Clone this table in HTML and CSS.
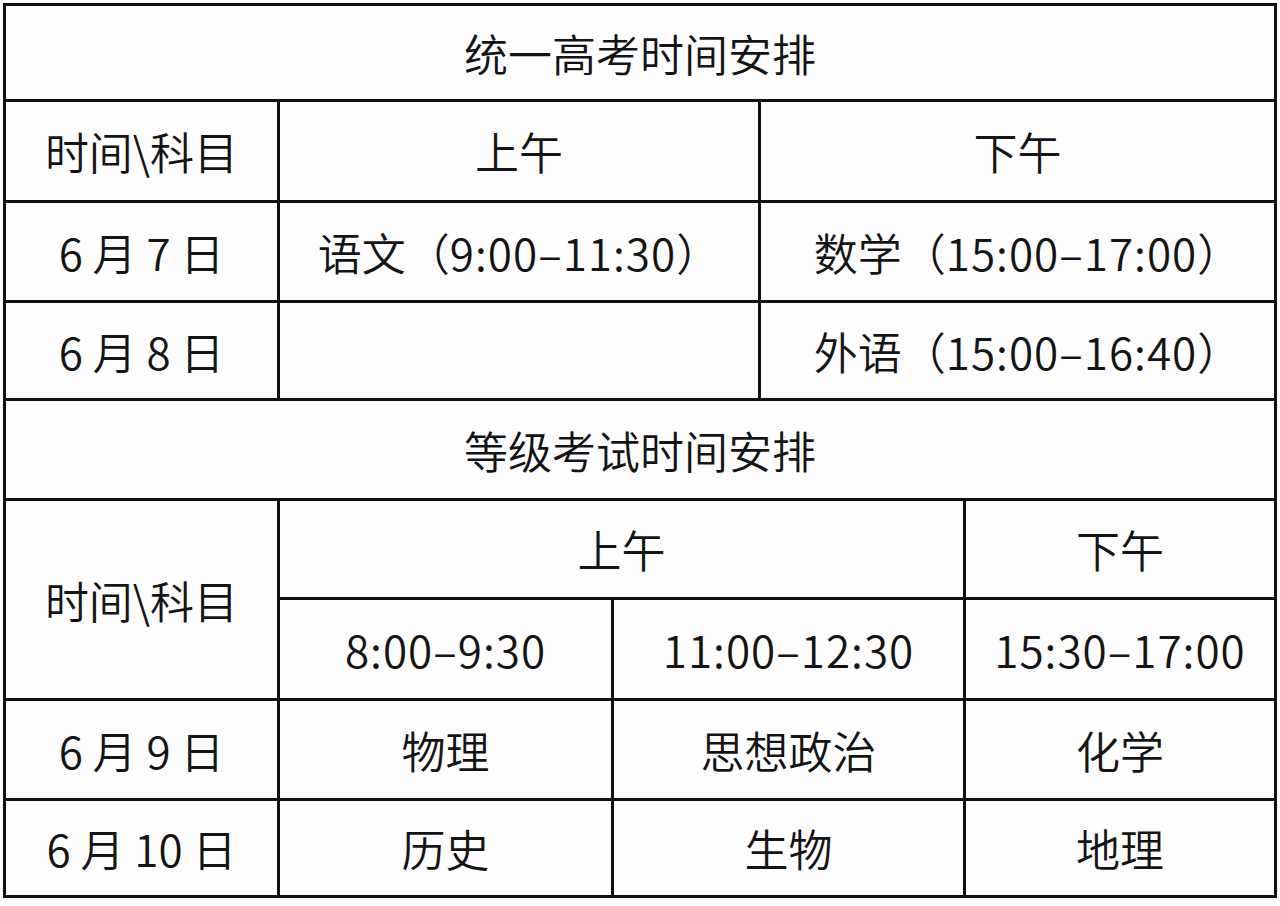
FILE: index.html
```html
<!DOCTYPE html>
<html lang="zh-CN">
<head>
<meta charset="utf-8">
<title>统一高考时间安排</title>
<link rel="stylesheet" href="styles.css">
</head>
<body>
<div class="sheet">
  <div class="cell title">统一高考时间安排</div>

  <div class="cell c1">时间\科目</div>
  <div class="cell c23">上午</div>
  <div class="cell c45">下午</div>

  <div class="cell c1">6 月 7 日</div>
  <div class="cell c23">语文（<span class="t">9:00–11:30</span>）</div>
  <div class="cell c45 shift">数学（<span class="t">15:00–17:00</span>）</div>

  <div class="cell c1">6 月 8 日</div>
  <div class="cell c23"></div>
  <div class="cell c45 shift">外语（<span class="t">15:00–16:40</span>）</div>

  <div class="cell title">等级考试时间安排</div>

  <div class="cell c1 span2">时间\科目</div>
  <div class="cell c234">上午</div>
  <div class="cell c5">下午</div>

  <div class="cell c2"><span class="t">8:00–9:30</span></div>
  <div class="cell c34"><span class="t">11:00–12:30</span></div>
  <div class="cell c5"><span class="t">15:30–17:00</span></div>

  <div class="cell c1">6 月 9 日</div>
  <div class="cell c2">物理</div>
  <div class="cell c34">思想政治</div>
  <div class="cell c5">化学</div>

  <div class="cell c1">6 月 10 日</div>
  <div class="cell c2">历史</div>
  <div class="cell c34">生物</div>
  <div class="cell c5">地理</div>
</div>
</body>
</html>
```

FILE: styles.css
```css
html, body {
  margin: 0;
  padding: 0;
  background: #fdfdfe;
}

body {
  padding: 3px 0 0 3px;
  font-family: "Noto Sans CJK SC", "Noto Sans", sans-serif;
  color: #141414;
}

.sheet {
  width: 1268px;
  display: grid;
  grid-template-columns: 271px 331px 144px 202px 308px;
  grid-template-rows: 93px 98px 97px 95px 97px 96px 98px 97px 94px;
  gap: 3px;
  padding: 3px;
  background: #111;
}

.cell {
  background: #fdfdfe;
  display: flex;
  align-items: center;
  justify-content: center;
  font-size: 44px;
  font-weight: 350;
  line-height: 1;
  white-space: nowrap;
}

.t {
  letter-spacing: 1px;
}

.shift {
  padding-left: 20px;
}

.title { grid-column: 1 / -1; }
.c1 { grid-column: 1; }
.c2 { grid-column: 2; }
.c23 { grid-column: 2 / 4; }
.c234 { grid-column: 2 / 5; }
.c34 { grid-column: 3 / 5; }
.c45 { grid-column: 4 / 6; }
.c5 { grid-column: 5; }
.span2 { grid-row: span 2; }
```
